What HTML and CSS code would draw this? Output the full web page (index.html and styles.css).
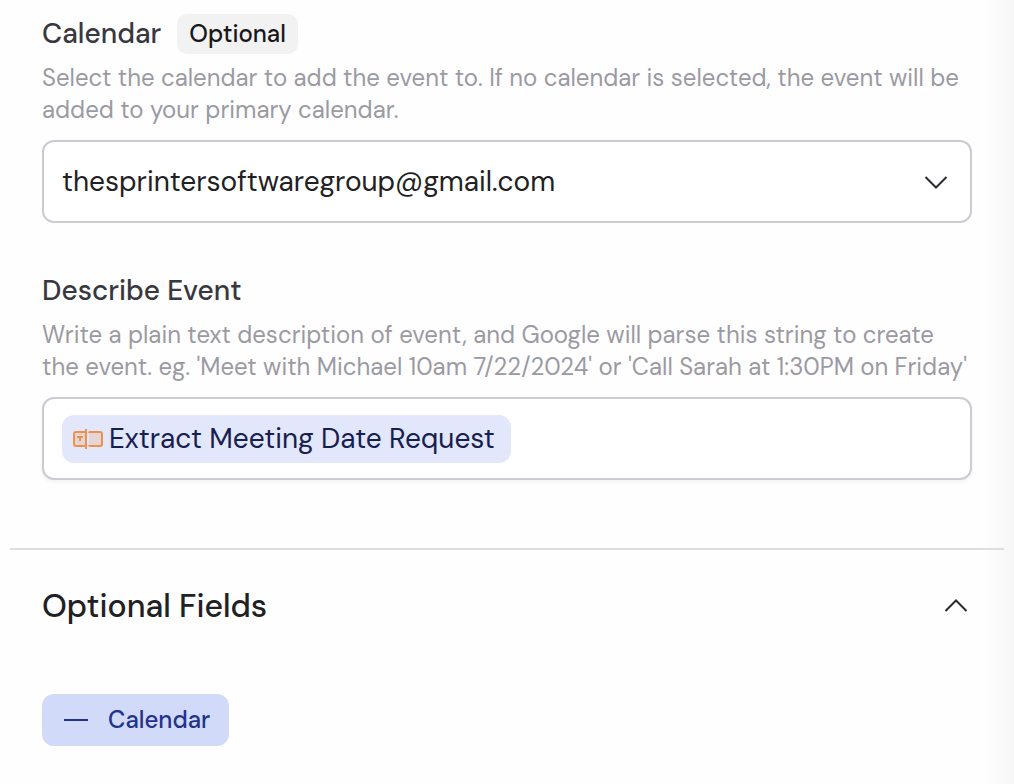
FILE: index.html
```html
<!DOCTYPE html>
<html lang="en">
<head>
<meta charset="utf-8">
<meta name="viewport" content="width=device-width, initial-scale=1">
<title>Calendar event settings</title>
<link rel="stylesheet" href="styles.css">
</head>
<body>
<main class="panel">
  <section class="fields">
    <div class="field">
      <div class="field-head">
        <label class="label" for="calendar">Calendar</label>
        <span class="badge">Optional</span>
      </div>
      <p class="hint" id="calendar-hint">Select the calendar to add the event to. If no calendar is selected, the event will be added to your primary calendar.</p>
      <div class="select">
        <select class="control select-input" id="calendar" aria-describedby="calendar-hint">
          <option>thesprintersoftwaregroup@gmail.com</option>
        </select>
        <svg class="chevron" viewBox="0 0 24 14" aria-hidden="true"><path d="M1.5 2 12 12.500 22.500 2"/></svg>
      </div>
    </div>
    <div class="field">
      <div class="field-head">
        <span class="label" id="describe-label">Describe Event</span>
      </div>
      <p class="hint" id="describe-hint">Write a plain text description of event, and Google will parse this string to create the event. eg. 'Meet with Michael 10am 7/22/2024' or 'Call Sarah at 1:30PM on Friday'</p>
      <div class="control token-input" role="textbox" contenteditable="true" spellcheck="false" aria-labelledby="describe-label" aria-describedby="describe-hint"><span class="token" contenteditable="false"><svg class="token-icon" viewBox="0 0 32 24" aria-hidden="true"><path class="icon-fill" d="M2 5H13V19H2ZM17 5H30V19H17Z"/><path class="icon-line" d="M13 5H4Q2 5 2 7V17Q2 19 4 19H13M18 5H28Q30 5 30 7V17Q30 19 28 19H18Q17 19 17 18M17 6Q17 5 18 5M14 2V22"/><path class="icon-mark" d="M5 9H11V11H9V14H7V11H5Z"/></svg>Extract Meeting Date Request</span></div>
    </div>
  </section>
  <section class="optional">
    <button class="toggle" type="button" aria-expanded="true">
      <span>Optional Fields</span>
      <svg class="chevron" viewBox="0 0 24 14" aria-hidden="true"><path d="M1.500 12 12 1.500 22.500 12"/></svg>
    </button>
    <button class="remove" type="button">
      <svg class="minus" viewBox="0 0 24 24" aria-hidden="true"><path d="M0 12H24"/></svg>
      Calendar
    </button>
  </section>
</main>
</body>
</html>
```
FILE: styles.css
```css
* { box-sizing: border-box; }
body {
  margin: 0;
  min-height: 100vh;
  font-family: "DM Sans", Inter, "Liberation Sans", sans-serif;
  color: #212124;
  background: linear-gradient(to left, #f6f6f6, #fefefe 32px);
}
button, select { font: inherit; color: inherit; }
svg { display: block; flex: none; fill: none; }
.panel { padding: 14px 10px 38px; }
.fields {
  display: flex;
  flex-direction: column;
  gap: 48px;
  padding: 0 32px;
}
.field-head {
  display: flex;
  align-items: center;
  gap: 16px;
  min-height: 40px;
}
.label {
  font-size: 28px;
  line-height: 36px;
  font-weight: 500;
  color: #38383e;
}
.badge {
  padding: 4px 12px;
  border-radius: 10px;
  background: #f2f2f2;
  color: #18181b;
  font-size: 24px;
  line-height: 32px;
  font-weight: 500;
}
.hint {
  margin: 8px 0 14px;
  font-size: 24px;
  line-height: 32px;
  font-weight: 450;
  color: #9b9aa3;
}
.control {
  width: 100%;
  min-height: 83px;
  border: 2px solid #cbcbd1;
  border-radius: 12px;
  background: #fff;
  font-size: 28px;
}
.select { display: grid; align-items: center; }
.select > * { grid-area: 1 / 1; }
.select-input { appearance: none; padding: 0 60px 0 18px; }
.select .chevron { justify-self: end; margin-right: 24px; pointer-events: none; }
.chevron { width: 24px; height: 14px; stroke: #2b2b2f; stroke-width: 2; }
.token-input {
  display: flex;
  align-items: center;
  padding: 0 18px;
  box-shadow: 0 2px 4px #0000000d;
}
.token {
  display: flex;
  align-items: center;
  gap: 5px;
  padding: 6px 16px 6px 10px;
  border-radius: 12px;
  background: #e3e7fb;
  color: #16204f;
  line-height: 36px;
}
.token-icon { width: 32px; height: 24px; }
.icon-fill { fill: #e5d5d6; }
.icon-line { stroke: #ef914b; stroke-width: 2; }
.icon-mark { fill: #ef914b; }
.optional {
  display: flex;
  flex-direction: column;
  align-items: flex-start;
  gap: 66px;
  margin-top: 68px;
  padding: 34px 32px 0;
  border-top: 2px solid #dedede;
}
.toggle {
  display: flex;
  align-items: center;
  justify-content: space-between;
  width: 100%;
  padding: 0 4px 0 0;
  border: 0;
  background: none;
  font-size: 32px;
  line-height: 44px;
  font-weight: 500;
}
.remove {
  display: flex;
  align-items: center;
  gap: 20px;
  padding: 8px 19px 8px 22px;
  border: 0;
  border-radius: 12px;
  background: #d1daf8;
  color: #23328a;
  font-size: 24px;
  line-height: 36px;
  font-weight: 500;
}
.minus { width: 24px; height: 24px; stroke: currentColor; stroke-width: 2; }
```
